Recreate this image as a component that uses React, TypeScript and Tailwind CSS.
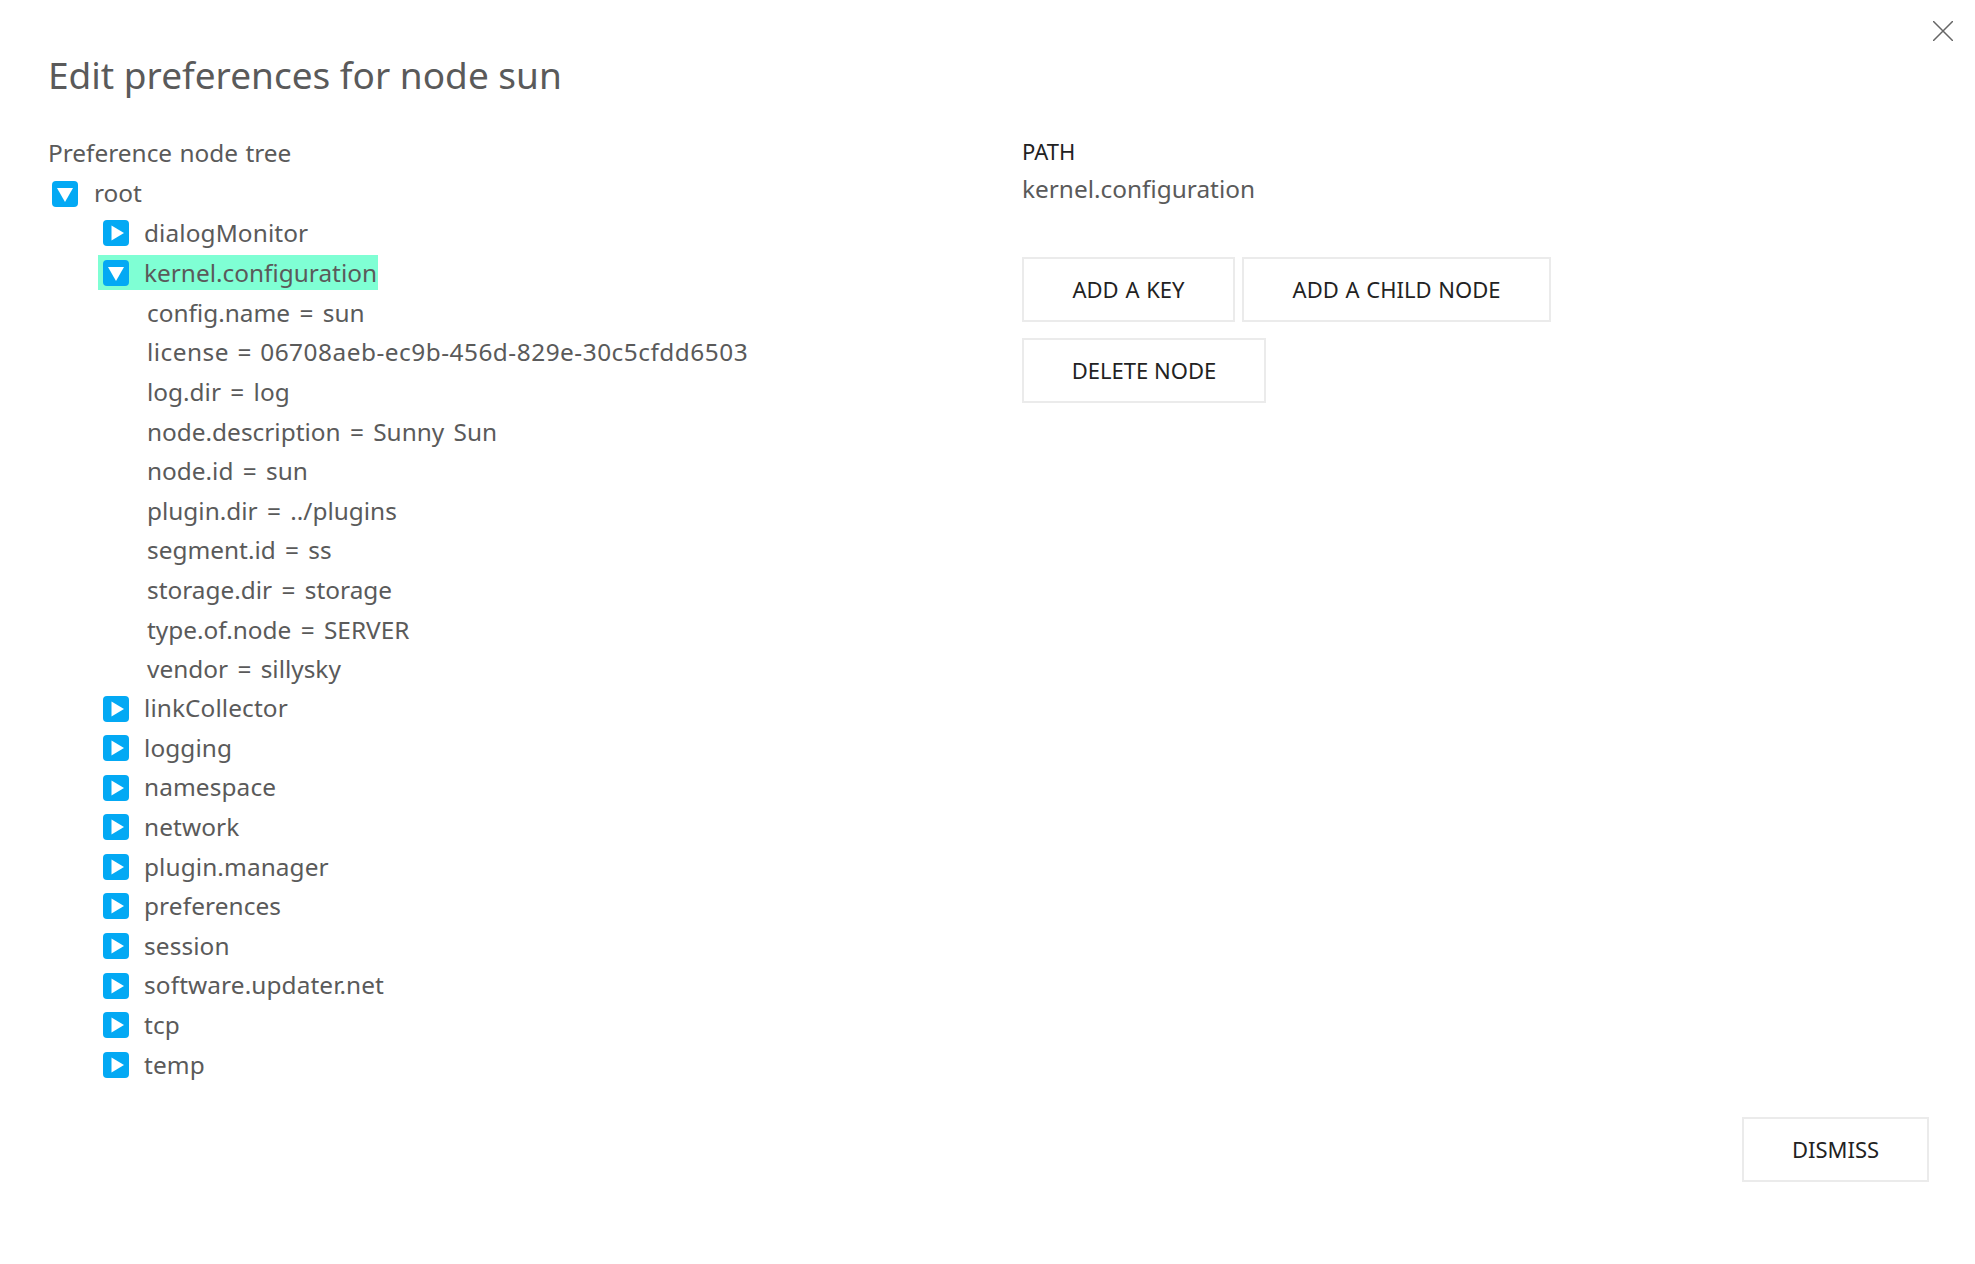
const kernelProps = [
  "config.name = sun",
  "log.dir = log",
  "node.description = Sunny Sun",
  "node.id = sun",
  "plugin.dir = ../plugins",
  "segment.id = ss",
  "storage.dir = storage",
  "type.of.node = SERVER",
  "vendor = sillysky",
];

const afterKernel = [
  "linkCollector",
  "logging",
  "namespace",
  "network",
  "plugin.manager",
  "preferences",
  "session",
  "software.updater.net",
  "tcp",
  "temp",
];

function Toggle({ open }: { open?: boolean }) {
  return (
    <svg className="w-[26px] h-[26px] shrink-0" viewBox="0 0 26 26">
      <rect width="26" height="26" rx="4" fill="#03a9f4" />
      {open ? <path d="M5 7h16l-8 14z" fill="#fff" /> : <path d="M8.500 5.500 21 13 8.500 20.500z" fill="#fff" />}
    </svg>
  );
}

function Node({ label, open }: { label: string; open?: boolean }) {
  return (
    <div className="h-[39.600px] pl-[55px] flex items-center">
      <Toggle open={open} />
      <span className="ml-[15px] tracking-[0.1px]">{label}</span>
    </div>
  );
}

function Prop({ text, className }: { text: string; className?: string }) {
  return <div className={`h-[39.600px] leading-[39.600px] whitespace-nowrap ${className ?? ""}`}>{text}</div>;
}

function Btn({ label, className }: { label: string; className: string }) {
  return (
    <button className={`h-[65px] border-2 border-[#ebebeb] bg-white text-[#222222] text-[22px] whitespace-nowrap ${className}`}>
      {label}
    </button>
  );
}

export default function App() {
  return (
    <div className="relative h-screen flex flex-col bg-white text-[#5a5a5a] font-['Noto_Sans',sans-serif] overflow-hidden">
      <button className="absolute top-[21px] right-[22px] text-[#666666]">
        <svg className="w-[20px] h-[20px] block" viewBox="0 0 20 20" fill="none" stroke="currentColor" strokeWidth="1.500">
          <path d="M0 0l20 20M20 0L0 20" />
        </svg>
      </button>

      <h1 className="pl-[48px] pt-[47px] text-[37px] leading-[56px]">Edit preferences for node sun</h1>

      <div className="flex mt-[30px] text-[24.400px] [word-spacing:3px]">
        <div className="w-[1022px] pl-[48px] shrink-0">
          <div className="h-[40px] leading-[40px] mb-[1px] [word-spacing:1px]">Preference node tree</div>
          <div className="h-[39.600px] pl-[4px] flex items-center">
            <Toggle open />
            <span className="ml-[16px]">root</span>
          </div>
          <Node label="dialogMonitor" />
          <div className="h-[39.600px] flex items-center">
            <div className="ml-[50px] h-[35px] pl-[5px] pr-[1px] flex items-center bg-[#7fffd4]">
              <Toggle open />
              <span className="ml-[15px]">kernel.configuration</span>
            </div>
          </div>
          <div className="pl-[99px]">
            <Prop text={kernelProps[0]} />
            <Prop text="license = 06708aeb-ec9b-456d-829e-30c5cfdd6503" className="tracking-[0.5px] [word-spacing:1.500px]" />
            {kernelProps.slice(1).map((p) => (
              <Prop key={p} text={p} />
            ))}
          </div>
          {afterKernel.map((n) => (
            <Node key={n} label={n} />
          ))}
        </div>

        <div>
          <div className="text-[#222222] text-[22px] leading-[40px] h-[40px] -mt-[2px]">PATH</div>
          <div className="h-[40px] leading-[40px] -mt-[2px]">kernel.configuration</div>
          <div className="mt-[48px] flex gap-[7px]">
            <Btn label="ADD A KEY" className="w-[213px] [word-spacing:1px]" />
            <Btn label="ADD A CHILD NODE" className="w-[309px] [word-spacing:1px]" />
          </div>
          <div className="mt-[16px]">
            <Btn label="DELETE NODE" className="w-[244px]" />
          </div>
        </div>
      </div>

      <div className="mt-auto pb-[82px] pr-[46px] flex justify-end">
        <Btn label="DISMISS" className="w-[187px]" />
      </div>
    </div>
  );
}
